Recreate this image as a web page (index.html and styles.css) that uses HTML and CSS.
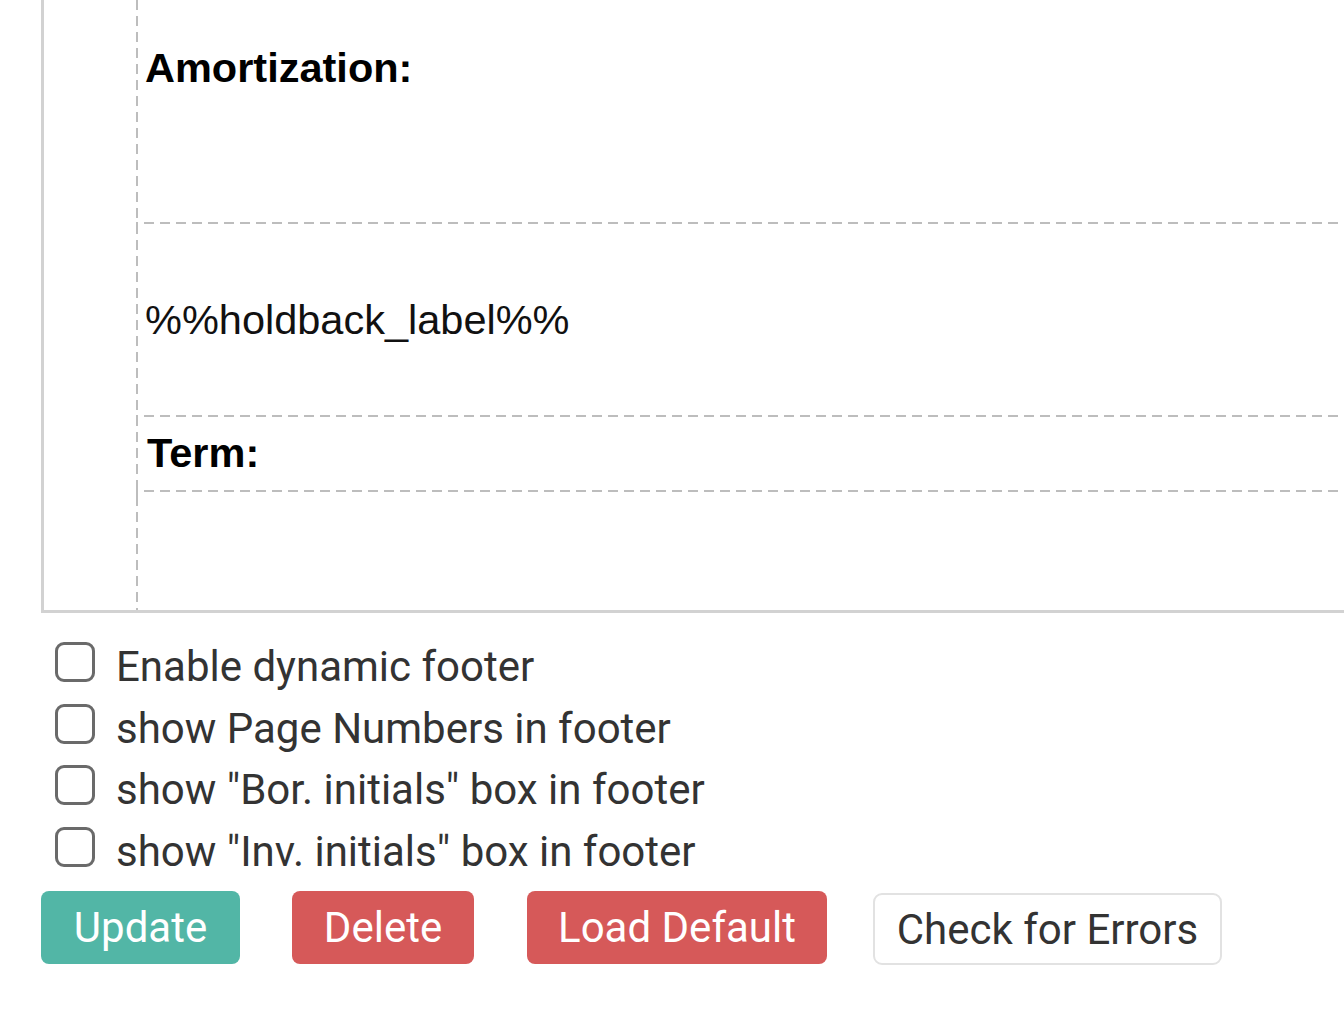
FILE: index.html
```html
<!DOCTYPE html>
<html>
<head>
<meta charset="utf-8">
<link rel="stylesheet" href="styles.css">
</head>
<body>
<div class="page">
  <div class="editor">
    <div class="table">
      <div class="row row-amort"><span class="bold">Amortization:</span></div>
      <div class="row row-hold"><span>%%holdback_label%%</span></div>
      <div class="row row-term"><span class="bold">Term:</span></div>
      <div class="row row-empty"></div>
    </div>
  </div>
  <div class="options">
    <label class="opt"><span class="box"></span><span>Enable dynamic footer</span></label>
    <label class="opt"><span class="box"></span><span>show Page Numbers in footer</span></label>
    <label class="opt"><span class="box"></span><span>show "Bor. initials" box in footer</span></label>
    <label class="opt"><span class="box"></span><span>show "Inv. initials" box in footer</span></label>
  </div>
  <div class="actions">
    <button class="btn btn-update">Update</button>
    <button class="btn btn-danger btn-delete">Delete</button>
    <button class="btn btn-danger btn-load">Load Default</button>
    <button class="btn btn-default">Check for Errors</button>
  </div>
</div>
</body>
</html>
```

FILE: styles.css
```css
html, body {
  margin: 0;
  padding: 0;
  background: #ffffff;
}

.page {
  width: 1344px;
  height: 1032px;
  overflow: hidden;
}

.editor {
  margin-left: 41px;
  height: 610px;
  border-left: 3px solid #d2d2d2;
  border-bottom: 3px solid #d2d2d2;
  padding-left: 92px;
  box-sizing: content-box;
}

.table {
  height: 100%;
  display: flex;
  flex-direction: column;
  background-image: repeating-linear-gradient(180deg, #bdbdbd 0 10px, transparent 10px 16px);
  background-size: 2px 100%;
  background-repeat: no-repeat;
  background-position: left top;
  font-family: "Liberation Sans", Arial, sans-serif;
  font-size: 41.5px;
  color: #111;
}

.row {
  display: flex;
  align-items: center;
  padding-left: 9px;
  box-sizing: border-box;
  background-image:
    linear-gradient(#bdbdbd, #bdbdbd),
    repeating-linear-gradient(90deg, transparent 0 6px, #bdbdbd 6px 16px);
  background-size: 2px 14px, 100% 2px;
  background-repeat: no-repeat;
  background-position: left top -6px, 2px top;
}

.row-amort {
  height: 222px;
  align-items: flex-start;
  padding-top: 44px;
  background-image: none;
}

.row-hold {
  height: 193px;
  padding-top: 2px;
}

.row-term {
  height: 75px;
  padding-left: 11px;
}

.row-empty {
  flex: 1;
}

.bold {
  font-weight: bold;
  color: #000;
}

.options {
  padding-top: 23px;
  padding-left: 55px;
  display: flex;
  flex-direction: column;
  font-family: Roboto, "Noto Sans", sans-serif;
  font-size: 42px;
  color: #333;
}

.opt {
  height: 61.5px;
  display: flex;
  align-items: center;
  gap: 21px;
}

.box {
  width: 40px;
  height: 40px;
  box-sizing: border-box;
  border: 3px solid #6a6a6a;
  border-radius: 9px;
  flex: none;
  margin-top: -9px;
}

.actions {
  margin-top: 9px;
  padding-left: 41px;
  display: flex;
  align-items: flex-start;
  font-family: Roboto, "Noto Sans", sans-serif;
}

.btn {
  height: 73px;
  border: none;
  border-radius: 8px;
  font-family: inherit;
  font-size: 42px;
  color: #fff;
  padding: 0;
  margin: 0;
  margin-right: 52px;
  white-space: nowrap;
  text-align: center;
}

.btn-update {
  background: #52b6a6;
  width: 199px;
}

.btn-danger {
  background: #d65959;
}

.btn-delete {
  width: 182px;
  margin-right: 53px;
}

.btn-load {
  width: 300px;
  margin-right: 46px;
}

.btn-default {
  margin-top: 2px;
  width: 349px;
  height: 72px;
  background: #fff;
  color: #333;
  border: 2px solid #e2e2e2;
  border-radius: 9px;
}
```
